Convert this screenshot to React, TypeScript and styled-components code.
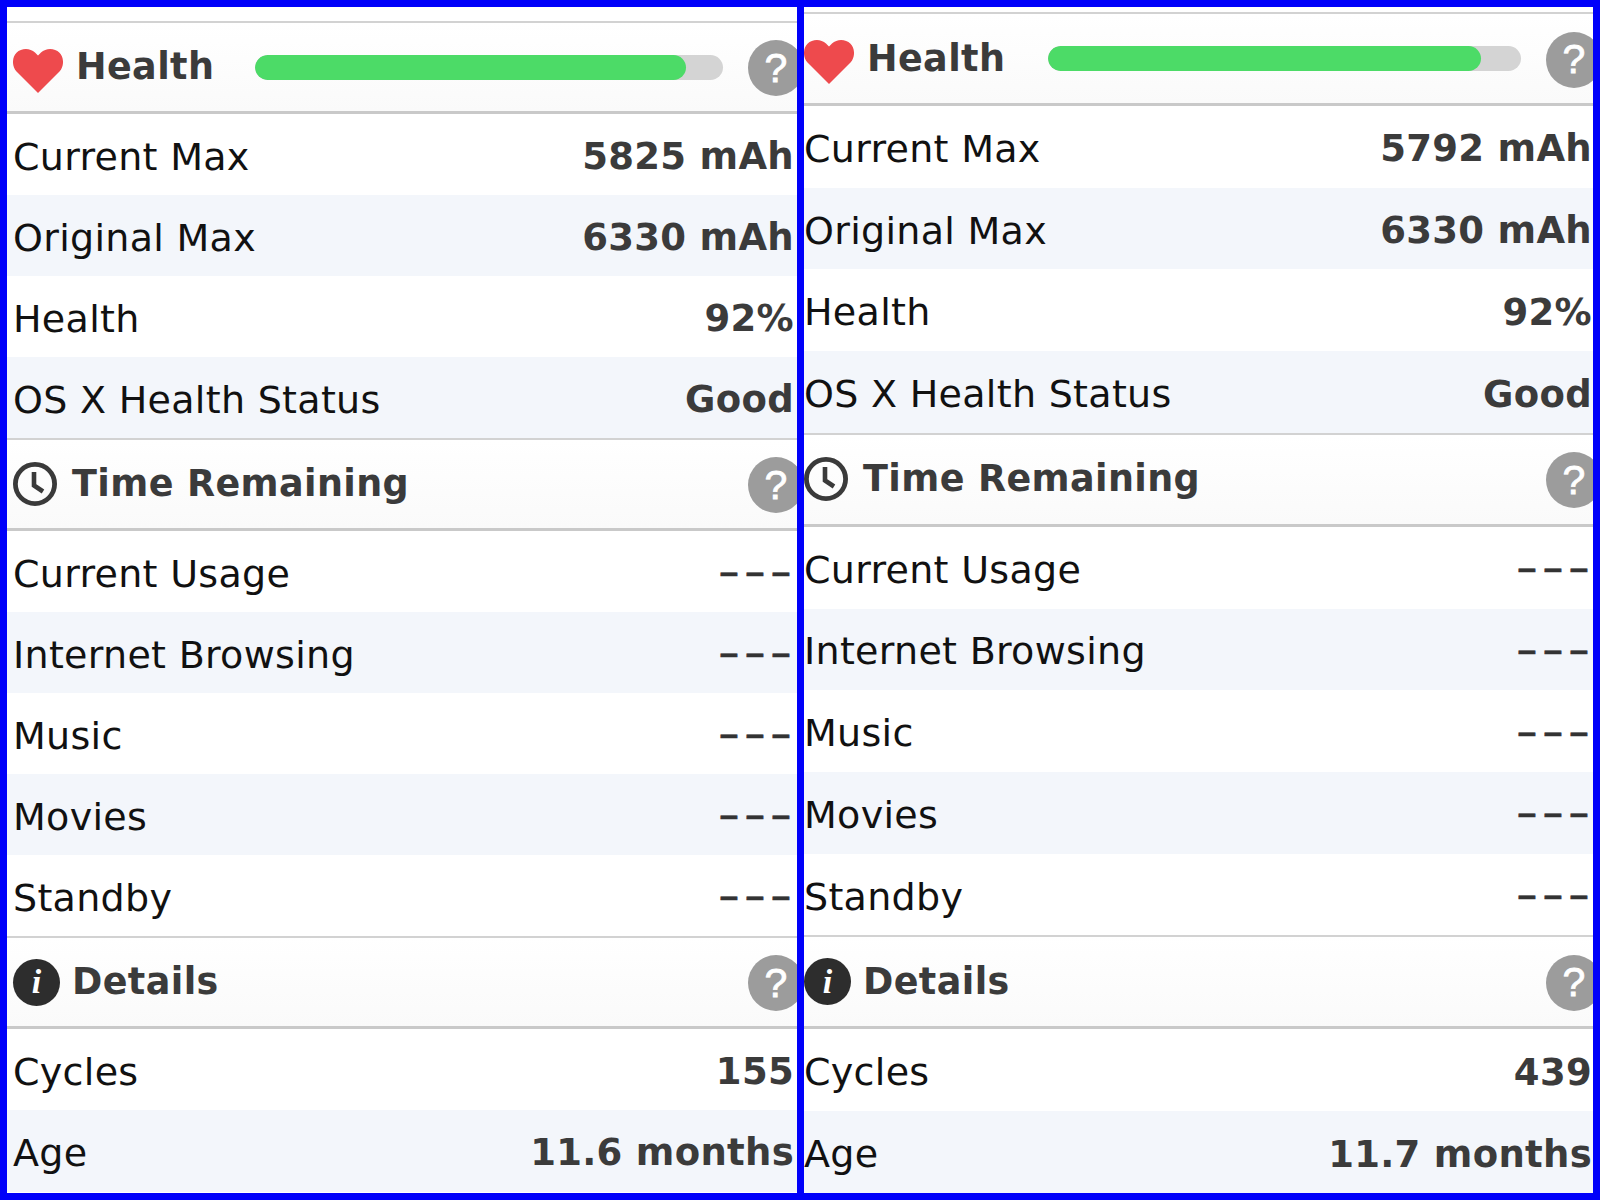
import React from "react";
import styled, { createGlobalStyle } from "styled-components";

const Global = createGlobalStyle`
  html, body { margin: 0; padding: 0; background: #fff; }
  #root { width: 1600px; height: 1200px; }
`;

const Frame = styled.div`
  box-sizing: border-box;
  width: 1600px;
  height: 1200px;
  border: 7px solid #0000fa;
  display: grid;
  grid-template-columns: 790px 789px;
  column-gap: 7px;
  background: #0000fa;
  font-family: "DejaVu Sans", sans-serif;
`;

const Panel = styled.section<{ $top: number; $pad: number; $padRight: number; $barGap: number }>`
  background: #fff;
  overflow: hidden;
  display: flex;
  flex-direction: column;
  padding-top: ${(p) => p.$top}px;
  --pad: ${(p) => p.$pad}px;
  --pad-right: ${(p) => p.$padRight}px;
  --bar-gap: ${(p) => p.$barGap}px;
`;

const Header = styled.header<{ $h: number }>`
  box-sizing: border-box;
  height: ${(p) => p.$h}px;
  flex: none;
  display: flex;
  align-items: center;
  padding-left: var(--pad);
  border-top: 2px solid #d2d2d2;
  border-bottom: 3px solid #c9c9c9;
  background: linear-gradient(#ffffff, #fafafa);
`;

const IconSlot = styled.span<{ $w: number; $drop: number }>`
  flex: none;
  width: ${(p) => p.$w}px;
  padding-top: ${(p) => p.$drop}px;
  display: flex;
  align-items: center;
`;

const Title = styled.h2`
  margin: 0;
  flex: none;
  font-size: 36.5px;
  line-height: 44px;
  font-weight: 700;
  color: #3b3b3b;
  letter-spacing: 0.4px;
`;

const Track = styled.div`
  flex: 1;
  height: 25px;
  margin-left: var(--bar-gap);
  border-radius: 13px;
  background: #d4d4d4;
  overflow: hidden;
`;

const Fill = styled.div`
  height: 100%;
  border-radius: 13px;
  background: #4cdb67;
`;

const Help = styled.span<{ $alone: boolean }>`
  flex: none;
  width: 56px;
  height: 56px;
  margin-top: 2px;
  margin-left: ${(p) => (p.$alone ? "auto" : "25px")};
  margin-right: var(--help-out);
  border-radius: 50%;
  background: #9c9c9c;
  color: #fff;
  display: flex;
  align-items: center;
  justify-content: center;
  font-family: "Liberation Sans", sans-serif;
  font-size: 41px;
  font-weight: 400;
  line-height: 1;
  -webkit-text-stroke: 0.8px #fff;
`;

const Row = styled.div<{ $h: number; $alt: boolean }>`
  box-sizing: border-box;
  height: ${(p) => p.$h}px;
  flex: none;
  display: flex;
  align-items: center;
  justify-content: space-between;
  padding: 4px var(--pad-right) 0 var(--pad);
  background: ${(p) => (p.$alt ? "#f3f6fb" : "#fff")};
`;

const Label = styled.span`
  font-size: 38px;
  color: #111;
  letter-spacing: 0.3px;
`;

const Value = styled.span`
  font-size: 37px;
  font-weight: 700;
  color: #3b3b3b;
  letter-spacing: 0.3px;
`;

const Dashes = styled.span`
  font-family: "Liberation Sans", sans-serif;
  font-size: 33px;
  font-weight: 700;
  color: #333;
  word-spacing: -1.6px;
  -webkit-text-stroke: 0.6px #333;
  margin-right: 4px;
  margin-bottom: 3px;
`;

const Section = styled.div<{ $out: number }>`
  display: flex;
  flex-direction: column;
  --help-out: -${(p) => p.$out}px;
`;

const Heart = () => (
  <svg width="50" height="44" viewBox="0 0 50 44">
    <path
      d="M25 44 L3.5 22.5 C-1.2 17.5 -1.2 8.5 3.5 3.8 C8.5 -1.2 17 -1.2 22 3.6 L25 6.6 L28 3.6 C33 -1.2 41.5 -1.2 46.5 3.8 C51.2 8.5 51.2 17.5 46.5 22.5 Z"
      fill="#ee4a4d"
    />
  </svg>
);

const Clock = () => (
  <svg width="44" height="44" viewBox="0 0 44 44" fill="none" stroke="#3a3a3a">
    <circle cx="22" cy="22" r="19.6" strokeWidth="4.8" />
    <path d="M21 10 V23.5 L30 29.5" strokeWidth="4.6" strokeLinejoin="miter" />
  </svg>
);

const InfoDisc = styled.span`
  width: 47px;
  height: 47px;
  border-radius: 50%;
  background: #2d2d2d;
  color: #fff;
  display: flex;
  align-items: center;
  justify-content: center;
  font-family: "Liberation Serif", serif;
  font-style: italic;
  font-weight: 700;
  font-size: 34px;
  line-height: 1;
`;

type Item = { label: string; value: string };
type SectionData = {
  title: string;
  icon: React.ReactNode;
  iconW: number;
  drop: number;
  bar?: number;
  rows: Item[];
};

const dash = "– – –";

const build = (cur: string, cycles: string, age: string, bar: number): SectionData[] => [
  {
    title: "Health",
    icon: <Heart />,
    iconW: 63,
    drop: 7,
    bar,
    rows: [
      { label: "Current Max", value: cur },
      { label: "Original Max", value: "6330 mAh" },
      { label: "Health", value: "92%" },
      { label: "OS X Health Status", value: "Good" },
    ],
  },
  {
    title: "Time Remaining",
    icon: <Clock />,
    iconW: 59,
    drop: 0,
    rows: [
      { label: "Current Usage", value: dash },
      { label: "Internet Browsing", value: dash },
      { label: "Music", value: dash },
      { label: "Movies", value: dash },
      { label: "Standby", value: dash },
    ],
  },
  {
    title: "Details",
    icon: <InfoDisc>i</InfoDisc>,
    iconW: 59,
    drop: 0,
    rows: [
      { label: "Cycles", value: cycles },
      { label: "Age", value: age },
    ],
  },
];

const Column = ({
  data,
  top,
  pad,
  padRight,
  out,
  headH,
  rowH,
  barGap,
}: {
  data: SectionData[];
  top: number;
  pad: number;
  padRight: number;
  out: number;
  headH: number;
  rowH: number;
  barGap: number;
}) => (
  <Panel $top={top} $pad={pad} $padRight={padRight} $barGap={barGap}>
    {data.map((s) => (
      <Section key={s.title} $out={out}>
        <Header $h={headH}>
          <IconSlot $w={s.iconW} $drop={s.drop}>{s.icon}</IconSlot>
          <Title>{s.title}</Title>
          {s.bar !== undefined && (
            <Track>
              <Fill style={{ width: `${s.bar}%` }} />
            </Track>
          )}
          <Help $alone={s.bar === undefined}>?</Help>
        </Header>
        {s.rows.map((r, i) => (
          <Row key={r.label} $h={rowH} $alt={i % 2 === 1}>
            <Label>{r.label}</Label>
            {r.value === dash ? <Dashes>{r.value}</Dashes> : <Value>{r.value}</Value>}
          </Row>
        ))}
      </Section>
    ))}
  </Panel>
);

export default function App() {
  return (
    <>
      <Global />
      <Frame>
        <Column data={build("5825 mAh", "155", "11.6 months", 92)} top={14} pad={6} padRight={3} out={7} headH={93} rowH={81.05} barGap={41} />
        <Column data={build("5792 mAh", "439", "11.7 months", 91.6)} top={5} pad={0} padRight={1} out={9} headH={94.1} rowH={81.7} barGap={43} />
      </Frame>
    </>
  );
}
